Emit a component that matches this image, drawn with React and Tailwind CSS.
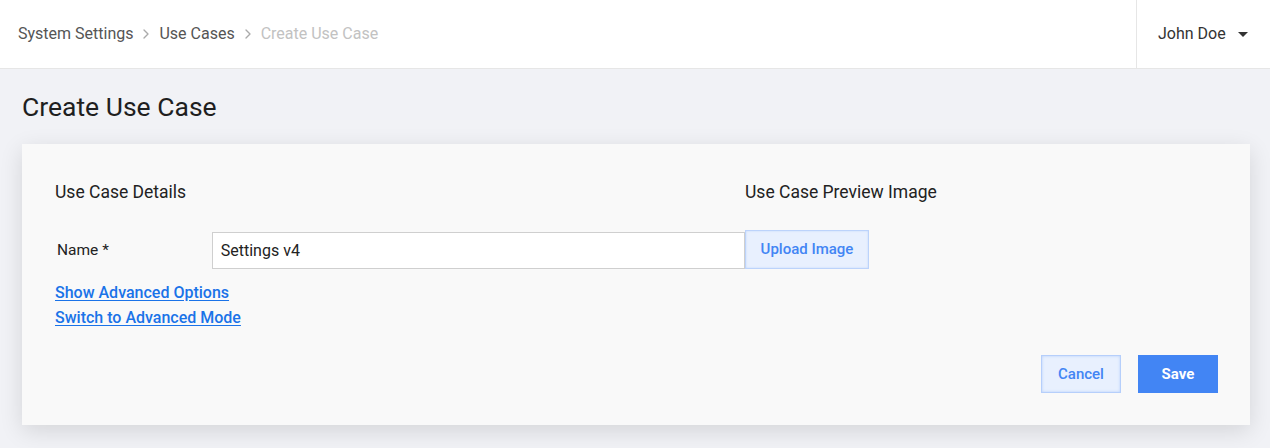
import React from "react";
import { ChevronRight } from "lucide-react";

const Crumb = ({ children, muted }) => (
  <span className={muted ? "text-[#c2c2c2]" : "text-[#555]"}>{children}</span>
);

export default function App() {
  return (
    <div
      className="min-h-[448px] bg-[#f1f2f6] text-[#222]"
      style={{ fontFamily: "Roboto, 'Liberation Sans', sans-serif" }}
    >
      {/* top bar */}
      <header className="h-[69px] bg-white border-b border-[#e6e6e6] flex items-stretch">
        <nav className="flex-1 flex items-center pl-[18px] text-[16px] gap-[5px]">
          <Crumb>System Settings</Crumb>
          <ChevronRight size={16} strokeWidth={2} className="text-[#aaa]" />
          <Crumb>Use Cases</Crumb>
          <ChevronRight size={16} strokeWidth={2} className="text-[#aaa]" />
          <Crumb muted>Create Use Case</Crumb>
        </nav>
        <div className="w-[134px] border-l border-[#e6e6e6] flex items-center pl-[21px] text-[16px] text-[#333]">
          <span>John Doe</span>
          <svg width="10" height="6" viewBox="0 0 10 6" className="ml-[12px] mt-[1px]">
            <path d="M0 0 L10 0 L5 5 Z" fill="#333" />
          </svg>
        </div>
      </header>

      <main className="px-[22px]">
        <h1 className="text-[26.5px] leading-[26px] font-normal pt-[25px] pb-[24px] text-[#1f1f1f]">
          Create Use Case
        </h1>

        <section className="bg-[#f9f9f9] shadow-[0_6px_22px_rgba(0,0,0,0.12)] pl-[33px] pr-[32px] pt-[37px] pb-[32px] w-[1228px]">
          <div className="flex">
            <div className="w-[690px]">
              <h2 className="text-[17.5px] leading-[22px] text-[#222]">Use Case Details</h2>
              <div className="flex items-center mt-[29px]">
                <label className="w-[157px] pl-[2px] text-[15.5px] text-[#222]">Name *</label>
                <input
                  defaultValue="Settings v4"
                  className="w-[534px] h-[37px] border border-[#cfcfcf] bg-white px-[8px] text-[16px] text-[#222] outline-none"
                />
              </div>
              <div className="flex flex-col items-start mt-[14px] gap-[5px] text-[16px] font-medium text-[#1a73e8] leading-[20px]">
                <a href="#" className="underline underline-offset-2">Show Advanced Options</a>
                <a href="#" className="underline underline-offset-2">Switch to Advanced Mode</a>
              </div>
            </div>
            <div className="flex-1">
              <h2 className="text-[17.5px] leading-[22px] text-[#222]">Use Case Preview Image</h2>
              <button className="mt-[27px] w-[124px] h-[39px] bg-[#e8f0fe] border border-[#bcd3fb] shadow-[inset_0_0_2px_#bcd3fb] text-[15px] font-medium text-[#4285f4]">
                Upload Image
              </button>
            </div>
          </div>

          <div className="flex justify-end gap-[17px] mt-[27px]">
            <button className="w-[80px] h-[38px] bg-[#e8f0fe] border border-[#b6cffb] shadow-[inset_0_0_3px_#b6cffb] text-[15px] font-medium text-[#4285f4]">
              Cancel
            </button>
            <button className="w-[80px] h-[38px] bg-[#4285f4] text-[15px] font-bold text-white">
              Save
            </button>
          </div>
        </section>
      </main>
    </div>
  );
}
